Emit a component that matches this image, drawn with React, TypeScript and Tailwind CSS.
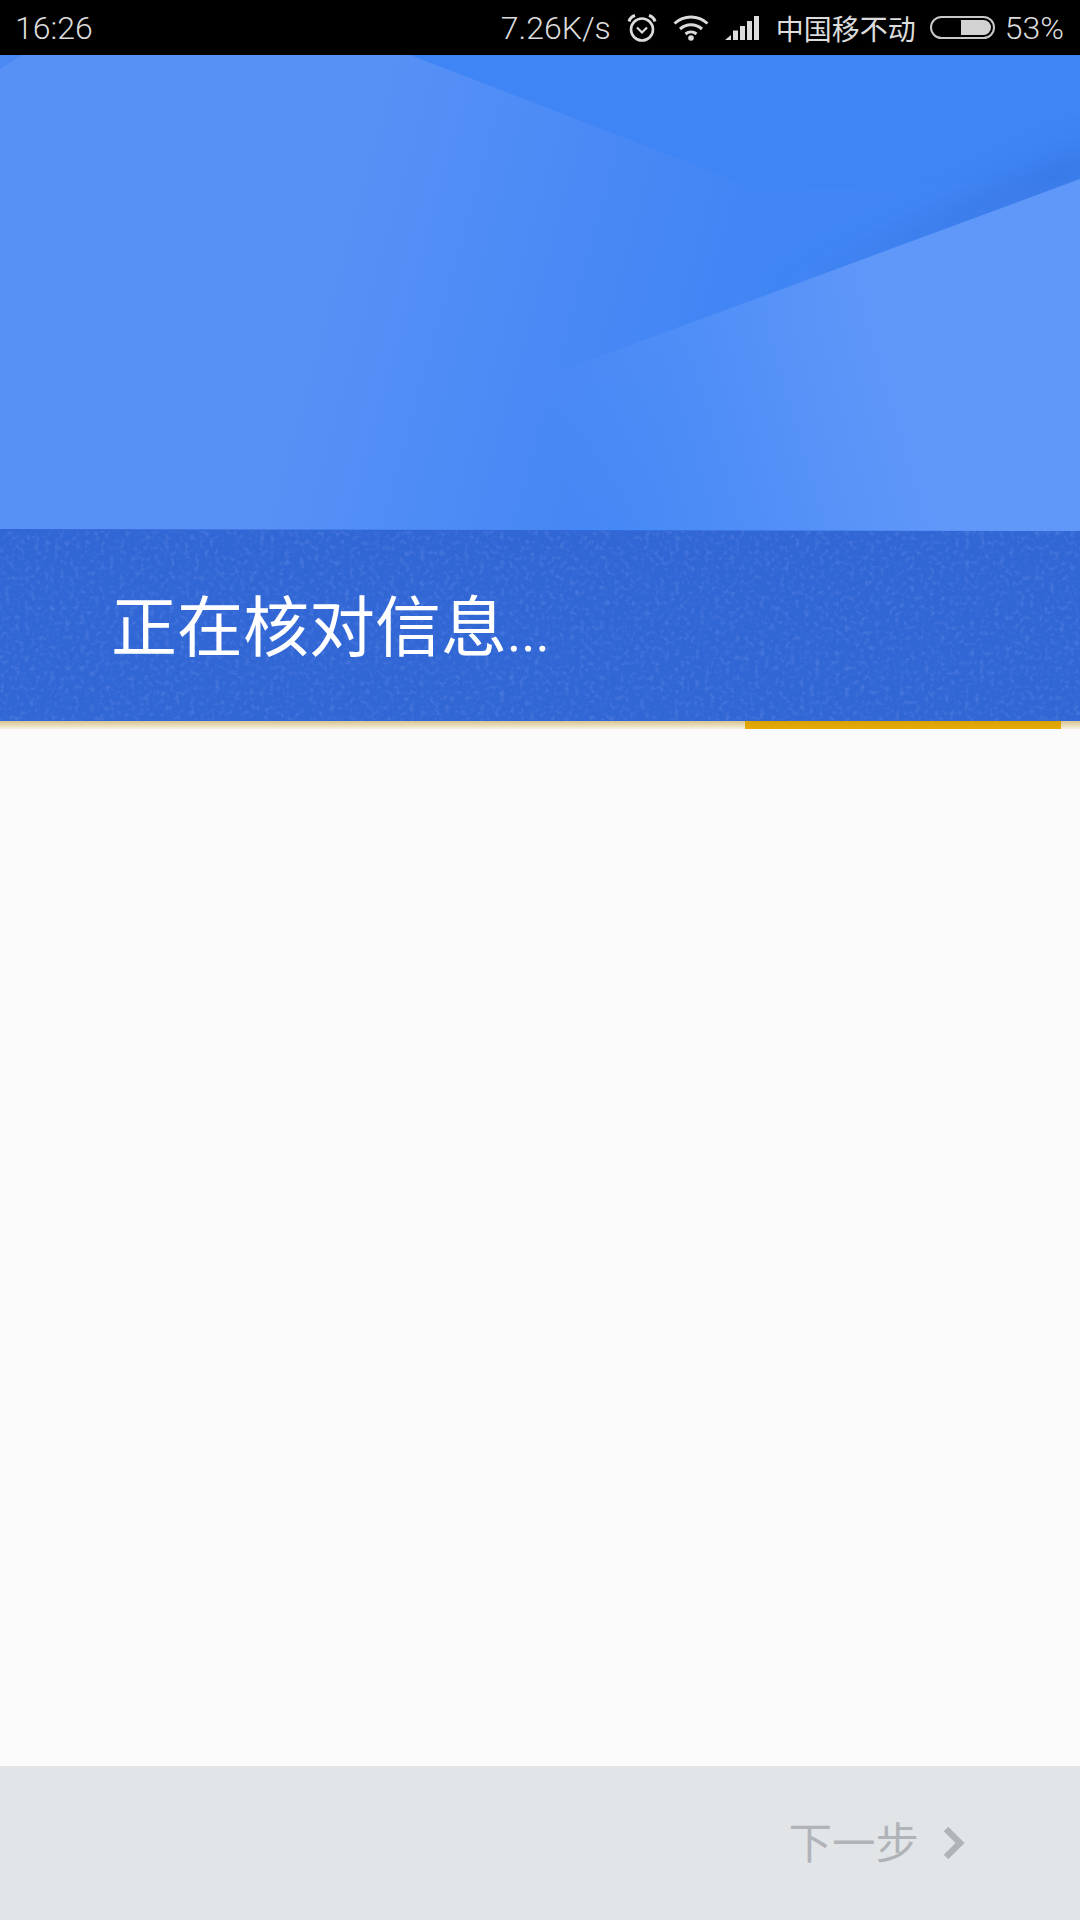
import React from "react";

const cjk = "font-['Noto_Sans_CJK_SC','Noto_Sans',sans-serif]";

const AlarmIcon = () => (
    <svg width="32" height="30" viewBox="0 0 32 30" fill="none" stroke="#dcdcdc" strokeWidth="2.6">
        <circle cx="16" cy="16.5" r="11" />
        <path d="M11 14.5l5 5 5-5" strokeWidth="2.2" />
        <path d="M3 8.5c.8-3 2.8-5 6-6M29 8.5c-.8-3-2.8-5-6-6" strokeWidth="3" />
    </svg>
);

const WifiIcon = () => (
    <svg width="36" height="26" viewBox="0 0 36 26" fill="none" stroke="#dcdcdc" strokeWidth="3">
        <path d="M1.5 8.5c9.5-8.6 23.5-8.6 33 0" />
        <path d="M7 14c6.4-5.6 15.6-5.6 22 0" />
        <path d="M12.5 19c3.2-2.6 7.8-2.6 11 0" />
        <circle cx="18" cy="23" r="2.8" fill="#dcdcdc" stroke="none" />
    </svg>
);

const SignalIcon = () => (
    <svg width="34" height="24" viewBox="0 0 34 24" fill="#dcdcdc">
        <path d="M0 24l6-5v5z" />
        <rect x="8" y="14.5" width="5" height="9.5" />
        <rect x="15" y="10" width="5" height="14" />
        <rect x="22" y="5" width="5" height="19" />
        <rect x="29" y="0" width="5" height="24" />
    </svg>
);

const BatteryIcon = () => (
    <div className="w-[65px] h-[23px] rounded-full border-2 border-[#c8c8c8] p-[2px] flex justify-end">
        <div className="w-[30px] h-full bg-[#d2d2d2] rounded-r-full" />
    </div>
);

const StatusBar = () => (
    <div className="h-[55px] bg-black flex items-center justify-between pl-[15px] pr-[16px] text-[#dcdcdc] text-[32px] font-['Roboto',sans-serif] font-light">
        <span>16:26</span>
        <div className="flex items-center">
            <span>7.26K/s</span>
            <div className="ml-[15px]"><AlarmIcon /></div>
            <div className="ml-[15px]"><WifiIcon /></div>
            <div className="ml-[16px]"><SignalIcon /></div>
            <span className={`ml-[17px] text-[28px] font-normal ${cjk}`}>中国移不动</span>
            <div className="ml-[14px]"><BatteryIcon /></div>
            <span className="ml-[10px]">53%</span>
        </div>
    </div>
);

const HeroArt = () => (
    <svg className="block" width="1080" height="476" viewBox="0 0 1080 476">
        <defs>
            <linearGradient id="leftFade" x1="360" y1="100" x2="720" y2="200" gradientUnits="userSpaceOnUse">
                <stop offset="0" stopColor="#5791f6" />
                <stop offset="0.7" stopColor="#4888f5" />
                <stop offset="1" stopColor="#4286f5" />
            </linearGradient>
            <linearGradient id="rightFade" x1="560" y1="400" x2="900" y2="300" gradientUnits="userSpaceOnUse">
                <stop offset="0" stopColor="#6098f9" stopOpacity="0" />
                <stop offset="0.5" stopColor="#6098f9" stopOpacity="0.5" />
                <stop offset="1" stopColor="#6098f9" />
            </linearGradient>
            <filter id="soften" x="-30%" y="-30%" width="160%" height="160%">
                <feGaussianBlur stdDeviation="16" />
            </filter>
        </defs>
        <rect width="1080" height="476" fill="url(#leftFade)" />
        <polygon points="410,0 1080,0 1080,124 760,135" fill="#4085f5" />
        <polygon points="0,0 22,0 0,14" fill="#4a89f3" />
        <polygon points="1090,124 760,246 1090,90" fill="#2f6bd6" opacity="0.6" filter="url(#soften)" />
        <polygon points="1080,124 620,294 440,360 440,476 1080,476" fill="url(#rightFade)" />
        <polygon points="0,474 1080,476 0,476" fill="#3266d5" />
    </svg>
);

const BandNoise = () => (
    <svg className="absolute inset-0" width="1080" height="190">
        <filter id="grain">
            <feTurbulence type="fractalNoise" baseFrequency="0.2" numOctaves="3" seed="4" />
            <feColorMatrix values="0 0 0 0 0.55  0 0 0 0 0.7  0 0 0 0 1  0 0 0 0.4 -0.2" />
        </filter>
        <rect width="1080" height="190" filter="url(#grain)" />
    </svg>
);

const App: React.FC = () => {
    return (
        <div className="w-[1080px] h-[1920px] flex flex-col bg-[#fbfbfb] overflow-hidden">
            <StatusBar />
            <HeroArt />
            <div className="relative h-[190px] bg-[#3166d5] flex items-center pl-[111px]">
                <BandNoise />
                <h1 className={`relative text-white text-[66px] leading-none font-normal -mt-[3px] ${cjk}`}>
                    正在核对信息<span className="font-['Roboto',sans-serif] text-[54px]">...</span>
                </h1>
            </div>
            <div className="h-[8px] bg-gradient-to-b from-[#d8c493] to-[#f7f1df] flex justify-end pr-[19px]">
                <div className="w-[316px] h-full bg-gradient-to-b from-[#d9a000] to-[#e8ab08]" />
            </div>
            <div className="flex-1" />
            <div className="h-[154px] bg-[#e2e5e8] flex items-center justify-end pr-[114px]">
                <span className={`text-[43.5px] leading-none text-[#b0b4b8] font-normal -mt-[4px] ${cjk}`}>下一步</span>
                <svg className="ml-[23px]" width="24" height="34" viewBox="0 0 24 34" fill="none" stroke="#b0b4b8" strokeWidth="6.5">
                    <path d="M4 3l14 14L4 31" />
                </svg>
            </div>
        </div>
    );
};

export default App;
